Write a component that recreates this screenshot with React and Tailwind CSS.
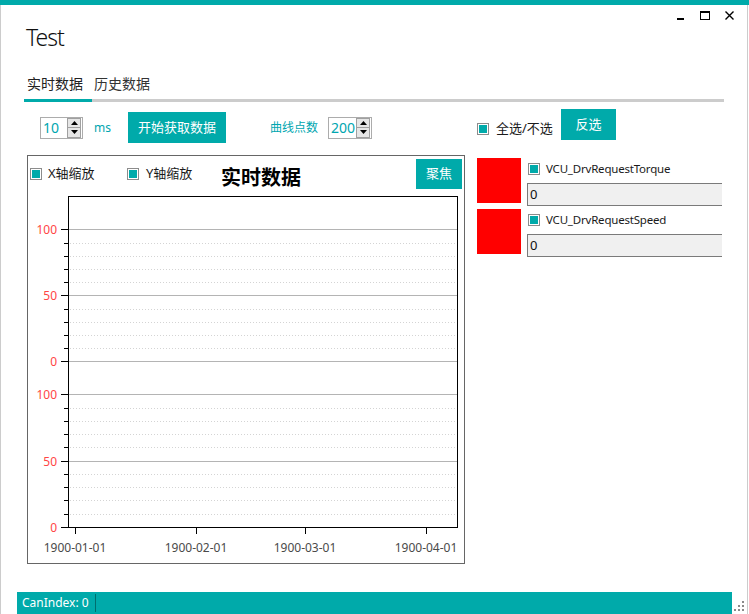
import React from "react";

const Check = () => (
  <span className="inline-block w-[12px] h-[12px] border border-[#8c8c8c] bg-white p-[1px] shrink-0">
    <span className="block w-full h-full bg-[#00aaaa]" />
  </span>
);

const Spinner = () => (
  <div className="flex flex-col w-[14px] h-[20px] mr-[1px] shrink-0">
    <div className="flex-1 flex items-center justify-center bg-[#e6e6e6] border border-[#a0a0a0]">
      <svg width="7" height="4" viewBox="0 0 7 4"><path d="M0 4 L3.5 0 L7 4 Z" fill="#000" /></svg>
    </div>
    <div className="flex-1 flex items-center justify-center bg-[#e6e6e6] border border-[#a0a0a0] border-t-0">
      <svg width="7" height="4" viewBox="0 0 7 4"><path d="M0 0 L3.5 4 L7 0 Z" fill="#000" /></svg>
    </div>
  </div>
);

const NumBox = ({ value, w }) => (
  <div className={`${w} h-[22px] border border-[#acacac] flex items-center bg-white shrink-0`}>
    <span className="flex-1 pl-[2px] text-[14px] leading-[18px] text-[#00a6b0]">{value}</span>
    <Spinner />
  </div>
);

const Chart = () => {
  const L = 40, R = 429, T = 4, B = 335;
  const upper = { top: 37.3, zero: 169.3 };
  const lower = { top: 202.3, zero: 335 };
  const lines = [];
  [upper, lower].forEach((c, ci) => {
    const step = (c.zero - c.top) / 10;
    for (let i = 0; i <= 10; i++) {
      const y = Math.round(c.zero - step * i) + 0.5;
      const major = i % 5 === 0;
      if (major && !(ci === 1 && i === 0)) {
        lines.push(<line key={`g${ci}${i}`} x1={L} x2={R} y1={y} y2={y} stroke="#b4b4b4" />);
      } else if (!major) {
        lines.push(<line key={`g${ci}${i}`} x1={L + 2} x2={R} y1={y} y2={y} stroke="#d4d4d4" strokeDasharray="1 2" />);
      }
      lines.push(<line key={`t${ci}${i}`} x1={major ? 33 : 36} x2={L} y1={y} y2={y} stroke="#000" />);
      if (major) {
        lines.push(
          <text key={`l${ci}${i}`} x={29} y={y + 4.5} textAnchor="end" fontSize="12" fill="#ff4545">
            {i * 10}
          </text>
        );
      }
    }
  });
  const xt = [
    [47, "1900-01-01"],
    [168, "1900-02-01"],
    [277, "1900-03-01"],
    [398, "1900-04-01"],
  ];
  return (
    <svg width="436" height="370" viewBox="0 0 436 370" style={{ fontFamily: "'Noto Sans', sans-serif" }}>
      {lines}
      <rect x={L + 0.5} y={T + 0.5} width={R - L} height={B - T} fill="none" stroke="#000" />
      {xt.map(([x, t]) => (
        <g key={t}>
          <line x1={x + 0.5} x2={x + 0.5} y1={B} y2={B + 7} stroke="#000" />
          <text x={x} y={360} textAnchor="middle" fontSize="12" fill="#4a4a4a">{t}</text>
        </g>
      ))}
    </svg>
  );
};

const Signal = ({ name }) => (
  <div className="flex">
    <div className="w-[44px] h-[45px] bg-[#ff0000] shrink-0" />
    <div className="ml-[6px] flex flex-col">
      <div className="h-[21px] flex items-center pl-[1px]">
        <Check />
        <span className="ml-[6px] text-[11.5px] tracking-[-0.2px] text-[#1a1a1a] whitespace-nowrap">{name}</span>
      </div>
      <div className="mt-[4px] w-[210px] h-[23px] bg-[#f0f0f0] border border-[#7a7a7a] flex items-center pl-[2px] text-[13px] text-[#111]">
        0
      </div>
    </div>
  </div>
);

export default function App() {
  return (
    <div
      className="w-[749px] h-[614px] bg-white flex flex-col overflow-hidden text-[#1a1a1a]"
      style={{ fontFamily: "'Noto Sans', 'Noto Sans CJK SC', sans-serif" }}
    >
      <div className="h-[5px] bg-[#00aaaa] shrink-0" />
      <div className="flex-1 flex flex-col border-l border-r border-[#cccccc] mr-[1px] min-h-0">
        {/* title bar */}
        <div className="h-[69px] flex shrink-0">
          <div className="pl-[25px] pt-[16px] text-[23px] leading-[32px] font-light tracking-[-1px] text-[#111]">Test</div>
          <div className="ml-auto pt-[5px] pr-[11px]">
            <svg width="60" height="12" viewBox="0 0 60 12">
              <rect x="1" y="8" width="7" height="2" fill="#000" />
              <rect x="24.5" y="1.5" width="9" height="8" fill="none" stroke="#000" />
              <rect x="24" y="1" width="10" height="2" fill="#000" />
              <path d="M49.5 1.5 L57.5 9.5 M57.5 1.5 L49.5 9.5" stroke="#000" strokeWidth="1.4" />
            </svg>
          </div>
        </div>

        {/* tabs */}
        <div className="ml-[23px] w-[700px] flex text-[14px] leading-[20px] shrink-0">
          <div className="w-[68px] pl-[3px] pb-[5px] border-b-[3px] border-[#00aaaa] text-[#222]">实时数据</div>
          <div className="pl-[2px] pb-[5px] border-b-[3px] border-[#cccccc] text-[#333] w-[80px]">历史数据</div>
          <div className="flex-1 border-b-[3px] border-[#cccccc]" />
        </div>

        {/* content */}
        <div className="flex ml-[26px]">
          <div className="w-[438px] flex flex-col">
            <div className="mt-[10px] h-[31px] flex items-center text-[12px] text-[#00a6b0]">
              <div className="ml-[13px]"><NumBox value="10" w="w-[43px]" /></div>
              <span className="w-[45px] pl-[11px]">ms</span>
              <button className="w-[98px] h-[31px] bg-[#00aaaa] text-white text-[13px]">开始获取数据</button>
              <span className="ml-[44px] w-[58px]">曲线点数</span>
              <NumBox value="200" w="w-[44px]" />
            </div>
            <div className="mt-[12px] h-[409px] border border-[#666666] flex flex-col">
              <div className="h-[36px] flex items-center text-[13px] shrink-0">
                <div className="w-[99px] pl-[2px] flex items-center">
                  <Check />
                  <span className="ml-[6px]">X轴缩放</span>
                </div>
                <div className="w-[94px] flex items-center">
                  <Check />
                  <span className="ml-[7px]">Y轴缩放</span>
                </div>
                <div className="mt-[8px] text-[20px] font-bold leading-[24px] text-black">实时数据</div>
                <button className="ml-auto mr-[2px] w-[46px] h-[30px] bg-[#00aaaa] text-white text-[13px]">聚焦</button>
              </div>
              <Chart />
            </div>
          </div>

          <div className="ml-[12px] w-[245px] overflow-hidden flex flex-col">
            <div className="mt-[7px] flex items-start">
              <div className="mt-[10px] h-[20px] flex items-center w-[84px]">
                <Check />
                <span className="ml-[7px] text-[13px]">全选/不选</span>
              </div>
              <button className="w-[55px] h-[31px] bg-[#00aaaa] text-white text-[13px]">反选</button>
            </div>
            <div className="mt-[18px] flex flex-col gap-[3px]">
              <Signal name="VCU_DrvRequestTorque" />
              <Signal name="VCU_DrvRequestSpeed" />
            </div>
          </div>
        </div>

        {/* status bar */}
        <div className="mt-auto flex items-end shrink-0">
          <div className="ml-[16px] w-[715px] h-[22px] bg-[#00aaaa] flex items-center">
            <div className="w-[79px] h-[18px] pl-[5px] border-r border-[#006e6e] text-white text-[12px] leading-[18px]">CanIndex: 0</div>
          </div>
          <svg width="14" height="22" viewBox="0 0 14 22" className="shrink-0">
            <rect x="10" y="9" width="2" height="2" fill="#8a8a8a" />
            <rect x="6" y="13" width="2" height="2" fill="#8a8a8a" />
            <rect x="10" y="13" width="2" height="2" fill="#8a8a8a" />
            <rect x="2" y="17" width="2" height="2" fill="#8a8a8a" />
            <rect x="6" y="17" width="2" height="2" fill="#8a8a8a" />
            <rect x="10" y="17" width="2" height="2" fill="#8a8a8a" />
          </svg>
        </div>
      </div>
    </div>
  );
}
